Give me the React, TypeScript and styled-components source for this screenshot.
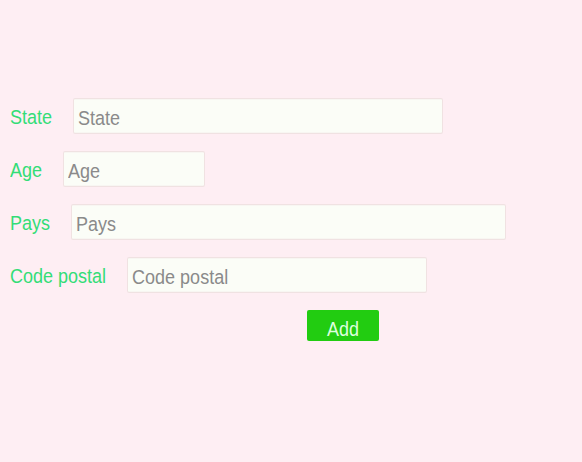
import React from "react";
import styled, { createGlobalStyle } from "styled-components";

const Global = createGlobalStyle`
  html, body { margin: 0; padding: 0; background: #feeef3; }
  body { font-family: "Liberation Sans", Arial, sans-serif; }
`;

const Form = styled.form`
  display: flex;
  flex-direction: column;
  gap: 17px;
  padding: 98px 0 0 10px;
`;

const Row = styled.div`
  display: flex;
  align-items: flex-start;
  gap: 21px;
  height: 36px;
`;

const Label = styled.label`
  display: inline-block;
  padding-top: 7px;
  color: #33dd77;
  font-size: 18px;
  line-height: 20px;
  white-space: nowrap;
  span {
    display: inline-block;
    transform: scaleY(1.16);
    transform-origin: top;
  }
`;

const Input = styled.input<{ $w: number }>`
  box-sizing: border-box;
  width: ${(p) => p.$w}px;
  height: 31px;
  padding: 3px 4px 0;
  background: #fbfdf7;
  border: 1px solid #f0e2e2;
  border-radius: 2px;
  font-family: "Liberation Sans", Arial, sans-serif;
  font-size: 18px;
  color: #555;
  outline: none;
  transform: scaleY(1.16);
  transform-origin: top;
  &::placeholder { color: #8a8a8a; }
`;

const Button = styled.button`
  box-sizing: border-box;
  display: block;
  margin-left: 297px;
  width: 72px;
  height: 31px;
  padding: 4px 0 0;
  background: #22cc11;
  color: #ddffdd;
  border: none;
  border-radius: 2px;
  font-family: "Liberation Sans", Arial, sans-serif;
  font-size: 18px;
  line-height: 18px;
  text-align: center;
  span {
    display: inline-block;
    transform: scaleY(1.16);
    transform-origin: top;
  }
`;

const fields = [
  { label: "State", w: 370 },
  { label: "Age", w: 142 },
  { label: "Pays", w: 435 },
  { label: "Code postal", w: 300 },
];

export default function App() {
  return (
    <>
      <Global />
      <Form onSubmit={(e) => e.preventDefault()}>
        {fields.map((f) => (
          <Row key={f.label}>
            <Label>
              <span>{f.label}</span>
            </Label>
            <Input $w={f.w} placeholder={f.label} />
          </Row>
        ))}
        <div>
          <Button type="submit">
            <span>Add</span>
          </Button>
        </div>
      </Form>
    </>
  );
}
